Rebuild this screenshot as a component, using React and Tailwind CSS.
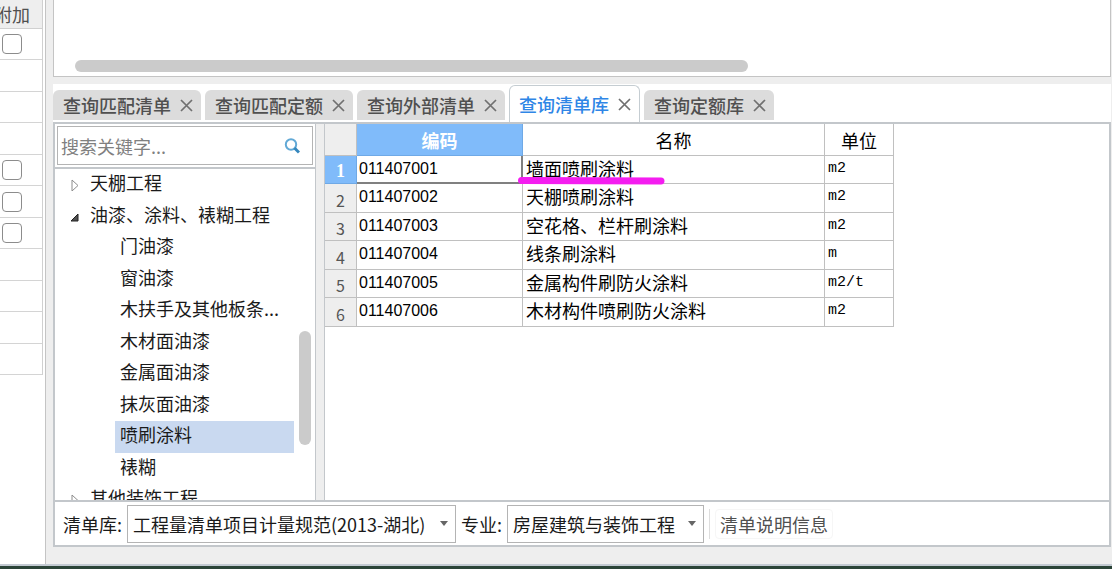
import React, { useState } from "react";
import { clsx } from "clsx";

const attachRows = [true, false, false, false, true, true, true, false, false, false, false];

const tabs = ["查询匹配清单", "查询匹配定额", "查询外部清单", "查询清单库", "查询定额库"];

const tree = [
  { name: "天棚工程", level: 0, open: false },
  { name: "油漆、涂料、裱糊工程", level: 0, open: true },
  { name: "门油漆", level: 1 },
  { name: "窗油漆", level: 1 },
  { name: "木扶手及其他板条...", level: 1 },
  { name: "木材面油漆", level: 1 },
  { name: "金属面油漆", level: 1 },
  { name: "抹灰面油漆", level: 1 },
  { name: "喷刷涂料", level: 1 },
  { name: "裱糊", level: 1 },
  { name: "其他装饰工程", level: 0, open: false },
];

const items = [
  { code: "011407001", name: "墙面喷刷涂料", unit: "m2" },
  { code: "011407002", name: "天棚喷刷涂料", unit: "m2" },
  { code: "011407003", name: "空花格、栏杆刷涂料", unit: "m2" },
  { code: "011407004", name: "线条刷涂料", unit: "m" },
  { code: "011407005", name: "金属构件刷防火涂料", unit: "m2/t" },
  { code: "011407006", name: "木材构件喷刷防火涂料", unit: "m2" },
];

const Arrow = ({ open }) => (
  <svg className="w-3 h-3 shrink-0" viewBox="0 0 12 12">
    {open ? (
      <path d="M9 3v7H2z" fill="#505050" stroke="#222" />
    ) : (
      <path d="M3 1l6 5.5L3 12z" fill="#fff" stroke="#8c8c8c" />
    )}
  </svg>
);

const Tab = ({ name, active, onSelect }) => (
  <div
    className={clsx(
      "flex items-center gap-[9px] pr-2",
      active
        ? "h-[37px] pl-[9px] bg-white border border-b-0 border-[#c5cdd2] rounded-t-md text-[#2f86e6]"
        : "h-[30px] pl-[10px] mb-[2px] bg-[#dcdcdc] rounded-t-md text-[#505050]"
    )}
  >
    <button role="tab" aria-selected={active} className="font-medium" onClick={onSelect}>
      {name}
    </button>
    <button aria-label="关闭" className="text-[#707070]">
      <svg className="w-[13px] h-[13px]" viewBox="0 0 13 13" stroke="currentColor" strokeWidth="1.7">
        <path d="M1 1l11 11M12 1L1 12" />
      </svg>
    </button>
  </div>
);

const Dropdown = ({ id, label, value, width }) => (
  <>
    <label htmlFor={id}>{label}</label>
    <div className={clsx("relative", width)}>
      <select
        id={id}
        defaultValue={value}
        className="w-full h-[38px] pl-[5px] pr-6 appearance-none bg-white border border-[#b4b4b4]"
      >
        <option>{value}</option>
      </select>
      <svg className="absolute right-2 top-4 w-2 h-[5px] pointer-events-none" viewBox="0 0 8 5">
        <path d="M0 0h8L4 5z" fill="#666" />
      </svg>
    </div>
  </>
);

const AttachColumn = () => (
  <div className="w-[46px] shrink-0 bg-white border-r border-[#c4c4c4] overflow-hidden">
    <div className="w-[43px] border-r border-[#d0d0d0]">
      <div className="h-[29px] pr-3 flex items-center justify-end bg-[#eee] border-b border-[#d0d0d0] text-[#505050] whitespace-nowrap">
        附加
      </div>
      {attachRows.map((box, i) => (
        <div
          key={i}
          className={clsx(
            "pl-[2px] flex items-center border-b border-[#d4d4d4]",
            i % 2 ? "h-8" : "h-[31px]"
          )}
        >
          {box && (
            <input
              type="checkbox"
              aria-label="附加"
              className="w-5 h-5 appearance-none bg-white border border-[#8c8c8c] rounded"
            />
          )}
        </div>
      ))}
    </div>
  </div>
);

const TreePanel = ({ selected, setSelected }) => (
  <div className="w-[261px] shrink-0 flex flex-col bg-white border-r border-[#c3c7cb]">
    <div className="h-[45px] p-[2px] border-b-2 border-[#c3c7cb]">
      <div className="h-[39px] pl-[3px] pr-3 flex items-center border border-[#b4b4b4]">
        <input
          type="text"
          aria-label="搜索"
          placeholder="搜索关键字..."
          className="flex-1 min-w-0 outline-none placeholder:text-[#808080]"
        />
        <button aria-label="搜索">
          <svg className="w-4 h-4" viewBox="0 0 16 16" fill="none">
            <circle cx="7" cy="6.5" r="5.2" stroke="#62a9d6" strokeWidth="2" />
            <path d="M10.5 10l4.5 4.5" stroke="#3587bd" strokeWidth="3" />
          </svg>
        </button>
      </div>
    </div>
    <div className="relative flex-1 min-h-0 overflow-hidden">
      {tree.map((node, i) => (
        <div
          key={node.name}
          className={clsx("pr-[21px]", i % 2 ? "h-[31px]" : "h-8", node.level ? "pl-[60px]" : "pl-[14px]")}
        >
          <button
            onClick={() => setSelected(node.name)}
            className={clsx(
              "w-full h-full flex items-start text-left leading-[26px] whitespace-nowrap",
              node.level ? "pl-[5px]" : "gap-[9px]",
              selected === node.name && "bg-[#c9d9f0]"
            )}
          >
            {node.level === 0 && (
              <span className="h-8 flex items-center">
                <Arrow open={node.open} />
              </span>
            )}
            {node.name}
          </button>
        </div>
      ))}
      <div className="absolute right-1 top-[162px] w-3 h-[114px] rounded-full bg-[#cbcbcb]" />
    </div>
  </div>
);

const ItemTable = () => (
  <div className="flex-1 min-w-0 bg-white border-l border-[#c3c7cb]">
    <table className="table-fixed w-[569px] border-separate border-spacing-0 text-black">
      <colgroup>
        <col className="w-8" />
        <col className="w-[166px]" />
        <col className="w-[302px]" />
        <col className="w-[69px]" />
      </colgroup>
      <thead>
        <tr className="h-8">
          <th className="bg-[#eee] border-r border-b border-[#c0c0c0]" />
          <th className="bg-[#80bbfa] border-r border-b border-[#6fa9e6] text-white font-bold">编码</th>
          <th className="border-r border-b border-[#c0c0c0] font-normal">名称</th>
          <th className="border-r border-b border-[#c0c0c0] font-normal">单位</th>
        </tr>
      </thead>
      <tbody>
        {items.map((item, i) => (
          <tr key={item.code} className={i % 2 ? "h-[29px]" : "h-7"}>
            <th
              className={clsx(
                "p-0 pt-[3px] border-r border-b leading-6",
                i === 0
                  ? "bg-[#80bbfa] border-[#6fa9e6] text-white font-bold font-['Liberation_Serif',serif]"
                  : "bg-[#eee] border-[#c0c0c0] text-[#555] font-normal text-base"
              )}
            >
              {i + 1}
            </th>
            <td
              className={clsx(
                "p-0 pl-[2px] align-top font-['Liberation_Sans',sans-serif] text-base leading-[26px]",
                i === 0 ? "border-r-2 border-b-2 border-[#808080]" : "border-r border-b border-[#c0c0c0]"
              )}
            >
              {item.code}
            </td>
            <td className="relative p-0 pl-[3px] align-top border-r border-b border-[#c0c0c0] leading-6">
              {item.name}
              {i === 0 && (
                <svg className="absolute -left-[5px] top-[21px] w-[147px] h-2 z-10" viewBox="0 0 147 8">
                  <path d="M3.5 3.5L143 4" stroke="#f41df0" strokeWidth="7" strokeLinecap="round" />
                </svg>
              )}
            </td>
            <td className="p-0 pl-[3px] align-top border-r border-b border-[#c0c0c0] font-['Liberation_Mono',monospace] text-[15px] leading-[26px]">
              {item.unit}
            </td>
          </tr>
        ))}
      </tbody>
    </table>
  </div>
);

const App = () => {
  const [tab, setTab] = useState("查询清单库");
  const [selected, setSelected] = useState("喷刷涂料");

  return (
    <div className="h-screen flex flex-col overflow-hidden bg-[#eee] text-[18px] leading-6 text-[#1a1a1a] font-['Noto_Sans_CJK_SC',sans-serif]">
      <div className="flex-1 min-h-0 flex">
        <AttachColumn />
        <div className="flex-1 min-w-0 pl-[7px] pr-px pb-[17px] flex flex-col">
          <div className="h-[77px] shrink-0 pl-[21px] pb-1 flex items-end bg-white border border-t-0 border-[#c4c4c4]">
            <div className="w-[65%] h-3 rounded-full bg-[#cbcbcb]" />
          </div>

          <div role="tablist" className="mt-[7px] h-[38px] shrink-0 flex items-end gap-1 bg-white">
            {tabs.map((name) => (
              <Tab key={name} name={name} active={tab === name} onSelect={() => setTab(name)} />
            ))}
          </div>

          <div className="flex-1 min-h-0 flex flex-col border-2 border-[#c3c7cb]">
            <div className="flex-1 min-h-0 flex gap-2">
              <TreePanel selected={selected} setSelected={setSelected} />
              <ItemTable />
            </div>
            <div className="h-[45px] shrink-0 pl-2 flex items-center gap-[5px] bg-white border-t-2 border-[#c3c7cb] whitespace-nowrap">
              <Dropdown id="library" label="清单库:" value="工程量清单项目计量规范(2013-湖北)" width="w-[329px]" />
              <Dropdown id="major" label="专业:" value="房屋建筑与装饰工程" width="w-[197px]" />
              <div className="w-px h-[30px] bg-[#ddd]" />
              <button className="h-[30px] px-1 border border-[#f6f6f6] rounded text-[#505050]">
                清单说明信息
              </button>
            </div>
          </div>
        </div>
      </div>
      <div className="h-[5px] shrink-0 bg-[#2b4438] border-t-2 border-[#c3cad2]" />
    </div>
  );
};

export default App;
